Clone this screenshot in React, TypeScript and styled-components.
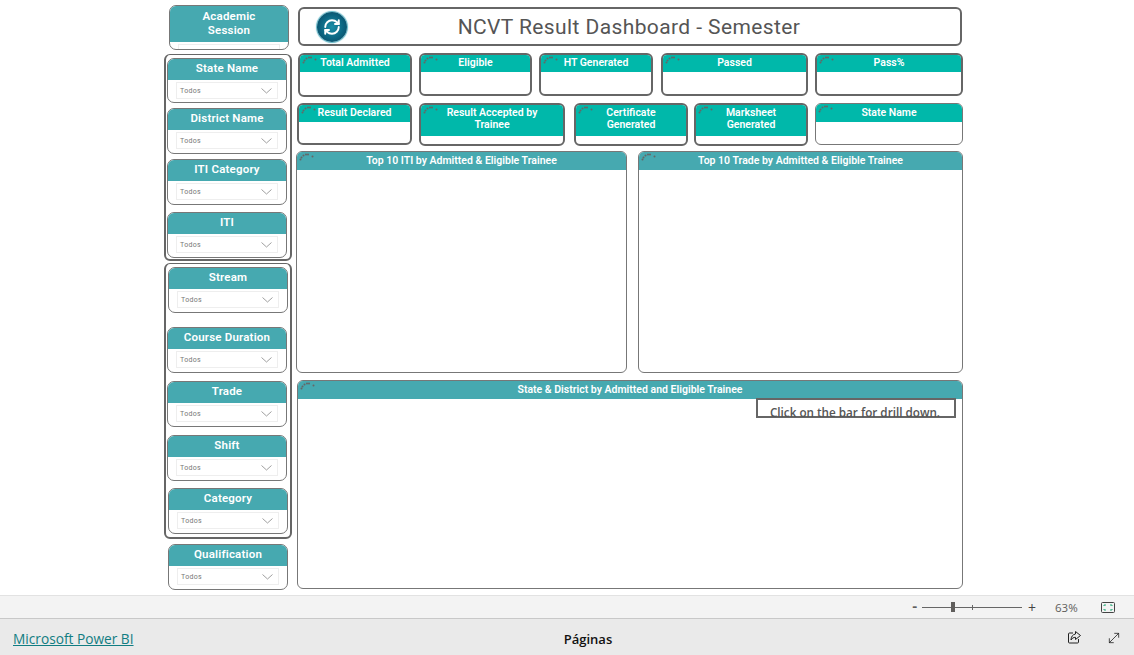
import React from 'react';
import styled, { createGlobalStyle } from 'styled-components';
import { RefreshCw, MoveDiagonal } from 'lucide-react';

const Global = createGlobalStyle`
  html, body { margin: 0; padding: 0; background: #fff; }
  body { font-family: "Roboto", "Liberation Sans", sans-serif; overflow: hidden; }
`;

const Page = styled.div`
  width: 1134px;
  height: 655px;
  display: flex;
  flex-direction: column;
  overflow: hidden;
`;

const Canvas = styled.div`
  height: 595px;
  padding: 5px 0 0 164px;
  box-sizing: border-box;
  display: flex;
  gap: 4px;
`;

const Side = styled.div`
  width: 128px;
  display: flex;
  flex-direction: column;
`;

const Group = styled.div<{ $h: number; $mt: number; $pl: number }>`
  height: ${p => p.$h}px;
  margin-top: ${p => p.$mt}px;
  padding: 3px 0 0 ${p => p.$pl}px;
  box-sizing: border-box;
  border: 2px solid #666;
  border-top-width: 1.5px;
  border-radius: 6px;
`;

const SlicerBox = styled.div<{ $mt: number; $ml: number; $h: number }>`
  width: 120px;
  height: ${p => p.$h}px;
  margin-top: ${p => p.$mt}px;
  margin-left: ${p => p.$ml}px;
  box-sizing: border-box;
  border: 1px solid #777;
  border-radius: 7px;
  background: #fff;
  overflow: hidden;
  display: flex;
  flex-direction: column;
`;

const SlicerHead = styled.div<{ $h: number }>`
  height: ${p => p.$h}px;
  flex: none;
  background: #46a9b0;
  color: #fff;
  font-size: 11.5px;
  font-weight: 600;
  line-height: 14px;
  letter-spacing: 0.2px;
  text-align: center;
  display: flex;
  align-items: center;
  justify-content: center;
  padding: 0 15px 3px;
  box-sizing: border-box;
`;

const Dropdown = styled.div`
  margin: 2px 8px 0 8px;
  height: 15px;
  flex: none;
  border: 1px solid #eee;
  padding: 0 5px 0 3px;
  display: flex;
  align-items: center;
  justify-content: space-between;
  font-size: 7px;
  color: #777;
  letter-spacing: 0.3px;
`;

const Main = styled.div`
  width: 668px;
  display: flex;
  flex-direction: column;
`;

const TitleBar = styled.div`
  height: 39px;
  margin: 2px 0 0 2px;
  width: 664px;
  box-sizing: border-box;
  border: 2px solid #666;
  border-radius: 6px;
  display: flex;
  align-items: center;
  padding-left: 17px;
`;

const Logo = styled.div`
  width: 30px;
  height: 30px;
  border-radius: 50%;
  background: radial-gradient(circle, #1a8fa8 0%, #0c6480 55%, #0a3f58 100%);
  box-shadow: 0 0 1px 1px #5fb6c6;
  color: #fff;
  display: flex;
  align-items: center;
  justify-content: center;
`;

const Title = styled.div`
  flex: 1;
  text-align: center;
  color: #555;
  font-size: 21px;
  letter-spacing: 0.4px;
  padding: 1px 41px 0 0;
  margin-left: -8px;
`;

const CardRow = styled.div<{ $mt: number; $ml: number }>`
  display: flex;
  margin-top: ${p => p.$mt}px;
  margin-left: ${p => p.$ml}px;
`;

const Card = styled.div<{ $w: number; $h: number; $ml: number; $thin?: boolean }>`
  width: ${p => p.$w}px;
  height: ${p => p.$h}px;
  margin-left: ${p => p.$ml}px;
  box-sizing: border-box;
  border: ${p => (p.$thin ? '1px solid #777' : '2px solid #666')};
  border-radius: 6px;
  overflow: hidden;
  position: relative;
  background: #fff;
`;

const CardHead = styled.div<{ $h: number; $thin?: boolean }>`
  height: ${p => p.$h}px;
  background: #00b8aa;
  color: #fff;
  font-size: 10.5px;
  font-weight: 600;
  line-height: 12px;
  text-align: center;
  padding: ${p => (p.$thin ? '3px' : '2px')} 12px 0;
  box-sizing: border-box;
`;

const PanelRow = styled.div`
  display: flex;
  margin-top: 5px;
`;

const Panel = styled.div<{ $w: number; $h: number; $ml: number }>`
  width: ${p => p.$w}px;
  height: ${p => p.$h}px;
  margin-left: ${p => p.$ml}px;
  box-sizing: border-box;
  border: 1px solid #777;
  border-radius: 6px;
  overflow: hidden;
  position: relative;
  background: #fff;
`;

const PanelHead = styled.div`
  height: 18px;
  background: #46a9b0;
  color: #fff;
  font-size: 10.5px;
  font-weight: 600;
  line-height: 17px;
  text-align: center;
`;

const BottomWrap = styled.div`
  position: relative;
  margin: 7px 0 0 1px;
  width: 666px;
`;

const Note = styled.div`
  position: absolute;
  left: 459px;
  top: 18px;
  width: 200px;
  height: 20px;
  box-sizing: border-box;
  border: 2px solid #666;
  padding-right: 2px;
  background: #fff;
  color: #555;
  font-family: "Open Sans", sans-serif;
  font-size: 11.7px;
  font-weight: 600;
  line-height: 24px;
  text-align: center;
  white-space: nowrap;
`;

const Dots = styled.svg`
  position: absolute;
  left: 2px;
  top: 0;
`;

const ZoomBar = styled.div`
  height: 24px;
  box-sizing: border-box;
  background: #f3f3f3;
  border-top: 1px solid #e2e2e2;
  border-bottom: 1px solid #c8c8c8;
  display: flex;
  align-items: center;
  justify-content: flex-end;
  padding-right: 19px;
  color: #605e5c;
`;

const Minus = styled.span`
  font-size: 14px;
  font-weight: 700;
  width: 10px;
`;

const Track = styled.div`
  width: 100px;
  height: 1px;
  background: #666;
  position: relative;
`;

const Thumb = styled.div`
  position: absolute;
  left: 29px;
  top: -5px;
  width: 4px;
  height: 10px;
  background: #605e5c;
`;

const Tick = styled.div`
  position: absolute;
  left: 50px;
  top: -2px;
  width: 1px;
  height: 5px;
  background: #666;
`;

const Plus = styled.span`
  font-family: "Open Sans", sans-serif;
  font-size: 14px;
  margin-left: 6px;
  color: #444;
`;

const Percent = styled.span`
  font-family: "Open Sans", sans-serif;
  font-size: 11.5px;
  margin-left: 19px;
  width: 24px;
`;

const FitIcon = styled.svg`
  margin-left: 22px;
`;

const Footer = styled.div`
  flex: 1;
  background: #eaeaea;
  display: flex;
  align-items: center;
  position: relative;
  padding: 3px 12px 0 13px;
`;

const BrandLink = styled.a`
  color: #117d82;
  font-family: "Open Sans", sans-serif;
  font-size: 13.7px;
  text-decoration: underline;
`;

const Pages = styled.div`
  position: absolute;
  left: 0;
  right: 0;
  padding-left: 42px;
  text-align: center;
  font-family: "Open Sans", sans-serif;
  font-size: 13px;
  font-weight: 600;
  color: #111;
`;

const FootIcons = styled.div`
  margin-left: auto;
  display: flex;
  align-items: center;
  gap: 24px;
  margin-top: -2px;
  color: #222;
`;

const CornerDots = () => (
  <Dots width="20" height="12" viewBox="0 0 20 12" fill="#666">
    <circle cx="1.5" cy="7.5" r="1" />
    <circle cx="2.5" cy="5.5" r="1" />
    <circle cx="4.5" cy="3.5" r="1" />
    <circle cx="7" cy="2.5" r="1" />
    <circle cx="9" cy="2.5" r="1" />
    <circle cx="13.5" cy="4.5" r="1" />
  </Dots>
);

const Chevron = () => (
  <svg width="11" height="6" viewBox="0 0 11 6" fill="none" stroke="#888" strokeWidth="0.8">
    <path d="M0.5 0.5 5.500 5 10.500 0.5" />
  </svg>
);

const Slicer = ({ name, mt, ml = 0, h = 46, head = 21, empty = false }: { name: string; mt: number; ml?: number; h?: number; head?: number; empty?: boolean }) => (
  <SlicerBox $mt={mt} $ml={ml} $h={h}>
    <SlicerHead $h={head}>{name}</SlicerHead>
    <Dropdown>
      {!empty && <span>Todos</span>}
      {!empty && <Chevron />}
    </Dropdown>
  </SlicerBox>
);

const topCards = [
  { name: 'Total Admitted', w: 114, ml: 0, h: 44 },
  { name: 'Eligible', w: 113, ml: 7, h: 43 },
  { name: 'HT Generated', w: 114, ml: 7, h: 43 },
  { name: 'Passed', w: 147, ml: 8, h: 43 },
  { name: 'Pass%', w: 148, ml: 7, h: 43 },
];

const lowerCards = [
  { name: 'Result Declared', w: 115, ml: 0, h: 42, head: 17 },
  { name: 'Result Accepted by Trainee', w: 146, ml: 7, h: 43, head: 31 },
  { name: 'Certificate Generated', w: 114, ml: 9, h: 43, head: 31 },
  { name: 'Marksheet Generated', w: 114, ml: 6, h: 43, head: 31 },
  { name: 'State Name', w: 148, ml: 7, h: 42, head: 18, thin: true },
];

export default function App() {
  return (
    <Page>
      <Global />
      <Canvas>
        <Side>
          <Slicer name="Academic Session" mt={0} ml={5} h={45} head={36} empty />
          <Group $h={207} $mt={4} $pl={1}>
            <Slicer name="State Name" mt={0} h={45} />
            <Slicer name="District Name" mt={5} />
            <Slicer name="ITI Category" mt={5} />
            <Slicer name="ITI" mt={7} />
          </Group>
          <Group $h={276} $mt={2} $pl={2}>
            <Slicer name="Stream" mt={0} />
            <Slicer name="Course Duration" mt={14} ml={-1} />
            <Slicer name="Trade" mt={8} ml={-1} />
            <Slicer name="Shift" mt={8} ml={-1} />
            <Slicer name="Category" mt={7} />
          </Group>
          <Slicer name="Qualification" mt={5} ml={4} />
        </Side>
        <Main>
          <TitleBar>
            <Logo>
              <RefreshCw size={18} strokeWidth={2.6} />
            </Logo>
            <Title>NCVT Result Dashboard - Semester</Title>
          </TitleBar>
          <CardRow $mt={7} $ml={2}>
            {topCards.map(c => (
              <Card key={c.name} $w={c.w} $h={c.h} $ml={c.ml}>
                <CornerDots />
                <CardHead $h={17}>{c.name}</CardHead>
              </Card>
            ))}
          </CardRow>
          <CardRow $mt={6} $ml={1}>
            {lowerCards.map(c => (
              <Card key={c.name} $w={c.w} $h={c.h} $ml={c.ml} $thin={c.thin}>
                <CornerDots />
                <CardHead $h={c.head} $thin={c.thin}>{c.name}</CardHead>
              </Card>
            ))}
          </CardRow>
          <PanelRow>
            <Panel $w={331} $h={222} $ml={0}>
              <CornerDots />
              <PanelHead>Top 10 ITI by Admitted &amp; Eligible Trainee</PanelHead>
            </Panel>
            <Panel $w={325} $h={222} $ml={11}>
              <CornerDots />
              <PanelHead>Top 10 Trade by Admitted &amp; Eligible Trainee</PanelHead>
            </Panel>
          </PanelRow>
          <BottomWrap>
            <Panel $w={666} $h={209} $ml={0}>
              <CornerDots />
              <PanelHead>State &amp; District by Admitted and Eligible Trainee</PanelHead>
            </Panel>
            <Note>Click on the bar for drill down.</Note>
          </BottomWrap>
        </Main>
      </Canvas>
      <ZoomBar>
        <Minus>-</Minus>
        <Track>
          <Thumb />
          <Tick />
        </Track>
        <Plus>+</Plus>
        <Percent>63%</Percent>
        <FitIcon width="14" height="11" viewBox="0 0 14 11" fill="none" stroke="#444">
          <rect x="0.5" y="0.5" width="13" height="10" rx="1" />
          <path d="M3 4V3h2M11 4V3H9M3 7v1h2M11 7v1H9" stroke="#2a7" />
        </FitIcon>
      </ZoomBar>
      <Footer>
        <BrandLink href="#">Microsoft Power BI</BrandLink>
        <Pages>Páginas</Pages>
        <FootIcons>
          <svg width="15" height="15" viewBox="0 0 15 15" fill="none" stroke="#222" strokeWidth="1">
            <path d="M6 3H2.5a1 1 0 0 0-1 1v8a1 1 0 0 0 1 1h8a1 1 0 0 0 1-1V9" />
            <path d="M8.500 1.500 13.500 5.500 8.500 9.500V7.300C6.500 7.300 5 8.300 4 10c0-3.200 1.700-5.500 4.500-6z" />
          </svg>
          <MoveDiagonal size={16} strokeWidth={1.2} />
        </FootIcons>
      </Footer>
    </Page>
  );
}
